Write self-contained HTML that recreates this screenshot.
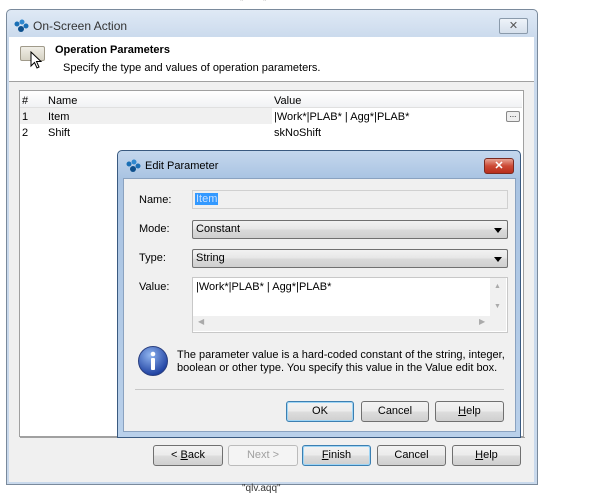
<!DOCTYPE html>
<html><head><style>
body{margin:0;width:600px;height:500px;background:#fff;font-family:"Liberation Sans",sans-serif;font-size:11px;color:#000;position:relative;overflow:hidden}
.a{position:absolute}
.btn{position:absolute;height:19px;border:1px solid #707070;border-radius:3px;background:linear-gradient(#f2f2f2,#ebebeb 50%,#dddddd 51%,#cfcfcf);text-align:center;line-height:19px;font-size:11px}
.def{border-color:#3c7fb1;box-shadow:inset 0 0 0 1px #9fd5f5}
.combo{position:absolute;height:17px;border:1px solid #707070;border-radius:2px;background:linear-gradient(#f2f2f2,#e6e6e6 50%,#dadada 51%,#cfcfcf);line-height:17px;padding-left:3px}
.combo:after{content:"";position:absolute;right:5px;top:7px;border:4px solid transparent;border-top:5px solid #000;border-bottom:0}
</style></head><body>
<div class="a" style="left:240px;top:0;font-size:10px;color:#333;line-height:6px">"&nbsp;&nbsp;&nbsp;&nbsp;&nbsp;&nbsp;&nbsp;"</div>
<div class="a" style="left:6px;top:9px;width:530px;height:474px;border:1px solid #7a8a9c;border-radius:5px 5px 0 0;background:linear-gradient(#dfe9f5,#c9d9ec 30px,#c9d9ec);"></div>
<svg class="a" style="left:13px;top:18px" width="16" height="16"><circle cx="4" cy="6" r="2.5" fill="#1a6fb5"/><circle cx="9" cy="4" r="2.5" fill="#2f88cf"/><circle cx="13" cy="8" r="2.5" fill="#1a6fb5"/><circle cx="8" cy="11" r="3" fill="#0d4f8c"/></svg>
<div class="a" style="left:33px;top:19px;font-size:12px;color:#333">On-Screen Action</div>
<div class="a" style="left:499px;top:18px;width:27px;height:14px;border:1px solid #8a9aab;border-radius:2px;background:linear-gradient(#eef3f9,#d6e0ec);text-align:center;font-size:11px;line-height:14px;color:#555">✕</div>
<div class="a" style="left:9px;top:37px;width:525px;height:44px;background:#fff;border-bottom:1px solid #a0a0a0"></div>
<div class="a" style="left:9px;top:82px;width:525px;height:400px;background:#f0f0f0"></div>
<div class="a" style="left:20px;top:46px;width:23px;height:13px;border:1px solid #a09a8a;border-radius:2px;background:linear-gradient(#f0eee6,#d6d2c4)"></div>
<svg class="a" style="left:30px;top:51px" width="14" height="20"><path d="M1 1 L1 15 L4.5 11.5 L7 17 L9 16 L6.5 10.5 L11 10.5 Z" fill="#fff" stroke="#000" stroke-width="1"/></svg>
<div class="a" style="left:55px;top:44px;font-weight:bold;font-size:11px">Operation Parameters</div>
<div class="a" style="left:63px;top:62px">Specify the type and values of operation parameters.</div>
<div class="a" style="left:19px;top:90px;width:503px;height:345px;border:1px solid #a0a0a0;background:#fff"></div>
<div class="a" style="left:20px;top:91px;width:502px;height:16px;background:linear-gradient(#fff,#f1f2f4);border-bottom:1px solid #e0e0e0"></div>
<div class="a" style="left:22px;top:95px">#</div><div class="a" style="left:48px;top:95px">Name</div><div class="a" style="left:274px;top:95px">Value</div>
<div class="a" style="left:20px;top:108px;width:252px;height:16px;background:#f0f0f0"></div>
<div class="a" style="left:22px;top:111px">1</div><div class="a" style="left:48px;top:111px">Item</div><div class="a" style="left:274px;top:111px">|Work*|PLAB* | Agg*|PLAB*</div>
<div class="a" style="left:506px;top:111px;width:12px;height:9px;border:1px solid #888;border-radius:2px;background:#eee;font-size:8px;line-height:5px;text-align:center">...</div>
<div class="a" style="left:22px;top:127px">2</div><div class="a" style="left:48px;top:127px">Shift</div><div class="a" style="left:274px;top:127px">skNoShift</div>
<div class="a" style="left:20px;top:437px;width:505px;border-top:1px solid #a0a0a0"></div>
<div class="btn" style="left:153px;top:445px;width:68px">&lt; <u>B</u>ack</div>
<div class="btn" style="left:228px;top:445px;width:68px;color:#a0a0a0;border-color:#bbb;background:#f4f4f4">Next &gt;</div>
<div class="btn def" style="left:302px;top:445px;width:67px"><u>F</u>inish</div>
<div class="btn" style="left:377px;top:445px;width:67px">Cancel</div>
<div class="btn" style="left:452px;top:445px;width:67px"><u>H</u>elp</div>
<div class="a" style="left:242px;top:483px;font-size:10px;color:#333">"qlv.aqq"</div>
<div class="a" style="left:117px;top:150px;width:402px;height:286px;border:1px solid #3a5a80;border-radius:5px 5px 0 0;background:linear-gradient(#c4d7ed,#a9c3e2 28px,#b9d0ea)"></div>
<svg class="a" style="left:125px;top:158px" width="16" height="16"><circle cx="4" cy="6" r="2.5" fill="#1a6fb5"/><circle cx="9" cy="4" r="2.5" fill="#2f88cf"/><circle cx="13" cy="8" r="2.5" fill="#1a6fb5"/><circle cx="8" cy="11" r="3" fill="#0d4f8c"/></svg>
<div class="a" style="left:145px;top:160px;font-size:11px">Edit Parameter</div>
<div class="a" style="left:484px;top:158px;width:28px;height:14px;border:1px solid #7a2a20;border-radius:3px;background:linear-gradient(#e8a595,#cc4a35 50%,#b82e1c);color:#fff;text-align:center;font-weight:bold;font-size:11px;line-height:14px">✕</div>
<div class="a" style="left:123px;top:178px;width:391px;height:252px;background:#f0f0f0;border:1px solid #8aa2c0"></div>
<div class="a" style="left:139px;top:194px">Name:</div>
<div class="a" style="left:192px;top:190px;width:314px;height:17px;border:1px solid #d0d0d0;background:#f0f0f0"></div>
<div class="a" style="left:195px;top:193px;background:#3399ff;color:#c8e0ff;padding:0 1px">Item</div>
<div class="a" style="left:139px;top:223px">Mode:</div>
<div class="combo" style="left:192px;top:220px;width:311px">Constant</div>
<div class="a" style="left:139px;top:252px">Type:</div>
<div class="combo" style="left:192px;top:249px;width:311px">String</div>
<div class="a" style="left:139px;top:281px">Value:</div>
<div class="a" style="left:192px;top:277px;width:314px;height:54px;border:1px solid #c8c8c8;background:#fff"></div>
<div class="a" style="left:196px;top:281px">|Work*|PLAB* | Agg*|PLAB*</div>
<div class="a" style="left:193px;top:316px;width:297px;height:15px;background:#f0f0f0"></div>
<div class="a" style="left:490px;top:278px;width:16px;height:53px;background:#f0f0f0"></div>
<div class="a" style="left:198px;top:317px;color:#aaa;font-size:8px">◀</div><div class="a" style="left:479px;top:317px;color:#aaa;font-size:8px">▶</div>
<div class="a" style="left:494px;top:283px;color:#aaa;font-size:7px">▲</div><div class="a" style="left:494px;top:303px;color:#aaa;font-size:7px">▼</div>
<svg class="a" style="left:137px;top:345px" width="32" height="32"><defs><radialGradient id="g" cx="40%" cy="30%" r="70%"><stop offset="0" stop-color="#8fb4ef"/><stop offset="1" stop-color="#1d3fa0"/></radialGradient></defs><circle cx="16" cy="16" r="14.5" fill="url(#g)" stroke="#2a3f7f"/><circle cx="16" cy="9" r="2.3" fill="#fff"/><rect x="14" y="13" width="4" height="12" rx="1" fill="#fff"/></svg>
<div class="a" style="left:177px;top:349px;line-height:13px;width:335px">The parameter value is a hard-coded constant of the string, integer, boolean or other type. You specify this value in the Value edit box.</div>
<div class="a" style="left:135px;top:389px;width:369px;border-top:1px solid #c8c8c8"></div>
<div class="btn def" style="left:286px;top:401px;width:66px">OK</div>
<div class="btn" style="left:361px;top:401px;width:66px">Cancel</div>
<div class="btn" style="left:435px;top:401px;width:67px"><u>H</u>elp</div>
</body></html>
